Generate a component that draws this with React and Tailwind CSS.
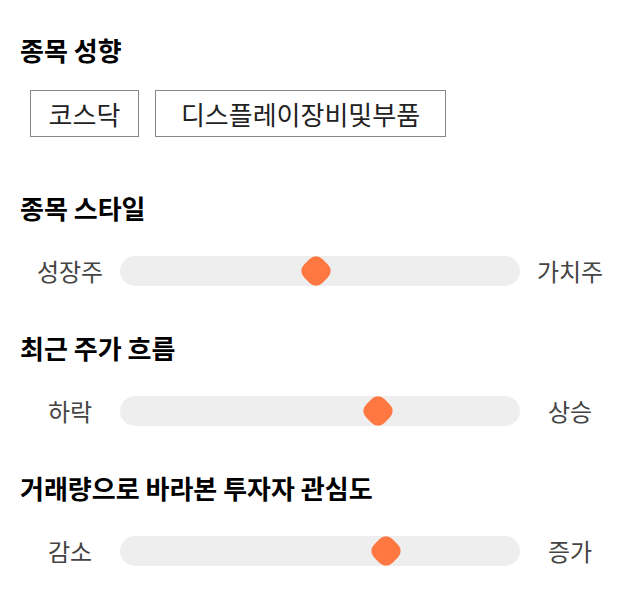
import React from "react";

const font = { fontFamily: '"Noto Sans CJK KR", "Noto Sans", sans-serif' };

function Slider({ left, right, pos }) {
  return (
    <div className="flex items-center mt-[30px] h-[30px]">
      <div className="w-[100px] text-center text-[24px] text-[#444] leading-[30px]">{left}</div>
      <div className="relative w-[400px] h-[30px] rounded-full bg-[#eeeeee]">
        <div
          className="absolute top-[2px] w-[26px] h-[26px] -ml-[13px] rotate-45 rounded-[9px] bg-[#ff7842]"
          style={{ left: pos }}
        />
      </div>
      <div className="w-[100px] text-center text-[24px] text-[#444] leading-[30px]">{right}</div>
    </div>
  );
}

export default function App() {
  return (
    <div className="bg-white w-[640px] h-[606px] px-[20px] pt-[32px]" style={font}>
      <h2 className="text-[26px] font-bold leading-[36px] text-black">종목 성향</h2>
      <div className="flex gap-[16px] ml-[10px] mt-[22px]">
        <div className="w-[109px] h-[47px] border border-[#888] flex items-center justify-center text-[26px] text-[#222]">코스닥</div>
        <div className="w-[291px] h-[47px] border border-[#888] flex items-center justify-center text-[26px] text-[#222]">디스플레이장비및부품</div>
      </div>

      <h2 className="mt-[53px] text-[26px] font-bold leading-[36px] text-black">종목 스타일</h2>
      <Slider left="성장주" right="가치주" pos={196} />

      <h2 className="mt-[44px] text-[26px] font-bold leading-[36px] text-black">최근 주가 흐름</h2>
      <Slider left="하락" right="상승" pos={258} />

      <h2 className="mt-[44px] text-[26px] font-bold leading-[36px] text-black">거래량으로 바라본 투자자 관심도</h2>
      <Slider left="감소" right="증가" pos={265.5} />
    </div>
  );
}
